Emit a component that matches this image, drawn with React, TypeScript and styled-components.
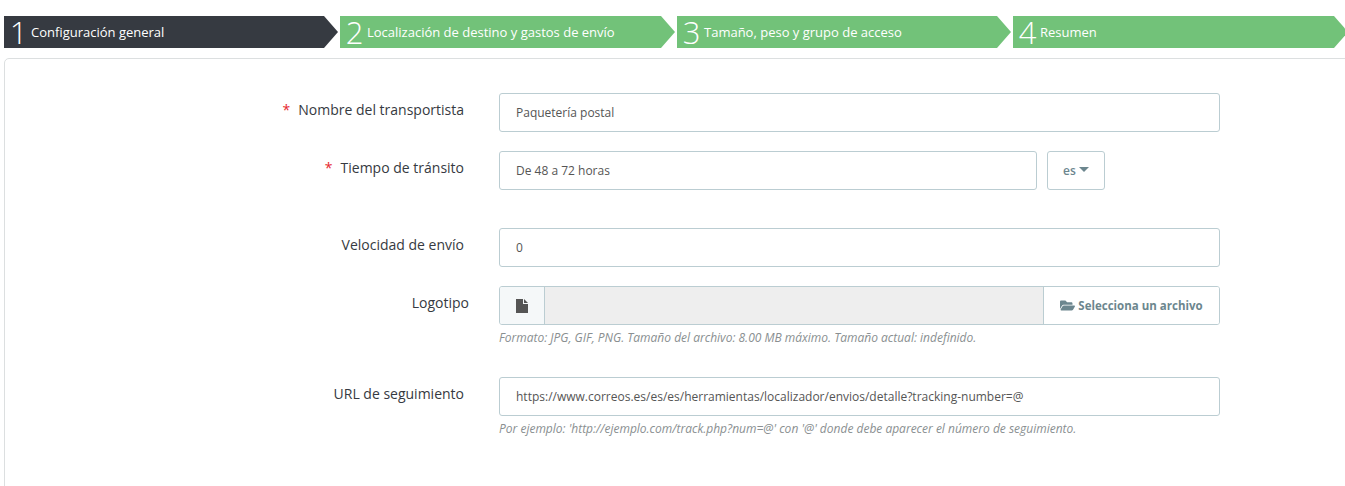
import React from 'react';
import styled, { createGlobalStyle } from 'styled-components';
import { FaFolderOpen } from 'react-icons/fa';

const GlobalStyle = createGlobalStyle`
  html, body {
    margin: 0;
    height: 486px;
    overflow: hidden;
    background: #fff;
    font-family: 'Open Sans', 'Liberation Sans', sans-serif;
  }
`;

const Page = styled.div`
  width: 1346px;
  padding: 16px 0 0 4px;
`;

const Steps = styled.ol`
  display: grid;
  grid-template-columns: 336px 337px 336px 337px;
  margin: 0 0 10px;
  padding: 0;
  list-style: none;
`;

const Step = styled.li<{ $active?: boolean }>`
  display: flex;
  align-items: center;
  height: 32px;
  margin-right: 2px;
  padding-left: 2px;
  background: ${(p) => (p.$active ? '#363a41' : '#72c279')};
  color: #fff;
  clip-path: polygon(0 0, calc(100% - 14px) 0, 100% 50%, calc(100% - 14px) 100%, 0 100%);
`;

const StepNumber = styled.span`
  width: 25px;
  font-size: 31px;
  font-weight: 300;
  line-height: 32px;
  text-align: center;
`;

const StepTitle = styled.span`
  font-size: 13px;
  white-space: nowrap;
`;

const Panel = styled.section`
  box-sizing: border-box;
  height: 480px;
  padding-top: 34px;
  border: 1px solid #dcdfe0;
  border-radius: 5px;
`;

const Row = styled.div<{ $gap?: number }>`
  display: flex;
  margin-bottom: ${(p) => p.$gap ?? 19}px;
`;

const Label = styled.label<{ $flush?: boolean }>`
  box-sizing: border-box;
  flex: none;
  width: 464px;
  padding: 7px ${(p) => (p.$flush ? 0 : 5)}px 0 0;
  font-size: 14px;
  line-height: 19px;
  color: #363a41;
  text-align: right;
`;

const Required = styled.span`
  margin-right: 8px;
  color: #e6272d;
`;

const Field = styled.div`
  width: 721px;
  margin-left: 30px;
`;

const FieldLine = styled.div`
  display: flex;
  gap: 10px;
  width: 606px;
`;

const TextInput = styled.input`
  box-sizing: border-box;
  flex: 1;
  width: 100%;
  min-width: 0;
  height: 39px;
  padding: 0 16px;
  border: 1px solid #bbcdd2;
  border-radius: 3px;
  background: #fff;
  font-family: inherit;
  font-size: 12px;
  color: #555;
  outline: none;
`;

const LangButton = styled.button`
  display: flex;
  align-items: center;
  justify-content: center;
  gap: 3px;
  flex: none;
  width: 58px;
  height: 39px;
  padding: 0;
  border: 1px solid #bbcdd2;
  border-radius: 3px;
  background: #fff;
  font-family: inherit;
  font-size: 12px;
  font-weight: 600;
  color: #6c868e;
`;

const Caret = styled.i`
  width: 0;
  height: 0;
  margin-top: -2px;
  border-top: 5px solid #6c868e;
  border-left: 5px solid transparent;
  border-right: 5px solid transparent;
`;

const FileGroup = styled.div`
  display: flex;
  box-sizing: border-box;
  height: 39px;
  border: 1px solid #bbcdd2;
  border-radius: 3px;
  overflow: hidden;
`;

const FileAddon = styled.span`
  display: flex;
  align-items: center;
  justify-content: center;
  flex: none;
  width: 44px;
  border-right: 1px solid #bbcdd2;
  background: #f5f8f9;
`;

const FileName = styled.div`
  flex: 1;
  background: #eee;
`;

const FileButton = styled.button`
  display: flex;
  align-items: center;
  justify-content: center;
  gap: 3px;
  flex: none;
  width: 176px;
  padding: 0;
  border: 0;
  border-left: 1px solid #bbcdd2;
  background: #fff;
  font-family: inherit;
  font-size: 11.5px;
  font-weight: 700;
  color: #6c868e;
`;

const Help = styled.p`
  margin: 5px 0 0;
  font-size: 12px;
  font-style: italic;
  line-height: 16px;
  color: #8a8f91;
  white-space: nowrap;
`;

const LastRow = styled(Row)`
  margin-top: 31px;
`;

const stepList = [
  'Configuración general',
  'Localización de destino y gastos de envío',
  'Tamaño, peso y grupo de acceso',
  'Resumen',
];

const App: React.FC = () => {
  return (
    <Page>
      <GlobalStyle />
      <Steps>
        {stepList.map((title, i) => (
          <Step key={title} $active={i === 0}>
            <StepNumber>{i + 1}</StepNumber>
            <StepTitle>{title}</StepTitle>
          </Step>
        ))}
      </Steps>

      <Panel>
        <Row>
          <Label>
            <Required>*</Required>
            Nombre del transportista
          </Label>
          <Field>
            <TextInput readOnly value="Paquetería postal" />
          </Field>
        </Row>

        <Row $gap={38}>
          <Label>
            <Required>*</Required>
            Tiempo de tránsito
          </Label>
          <Field>
            <FieldLine>
              <TextInput readOnly value="De 48 a 72 horas" />
              <LangButton>
                es
                <Caret />
              </LangButton>
            </FieldLine>
          </Field>
        </Row>

        <Row>
          <Label>Velocidad de envío</Label>
          <Field>
            <TextInput readOnly value="0" />
          </Field>
        </Row>

        <Row $gap={0}>
          <Label $flush>Logotipo</Label>
          <Field>
            <FileGroup>
              <FileAddon>
                <svg width="12" height="14" viewBox="0 0 12 14" fill="#555">
                  <path d="M0 0H7V5H12V14H0Z" />
                  <path d="M8 0L12 4H8Z" />
                </svg>
              </FileAddon>
              <FileName />
              <FileButton>
                <FaFolderOpen size={15} />
                Selecciona un archivo
              </FileButton>
            </FileGroup>
            <Help>Formato: JPG, GIF, PNG. Tamaño del archivo: 8.00 MB máximo. Tamaño actual: indefinido.</Help>
          </Field>
        </Row>

        <LastRow>
          <Label>URL de seguimiento</Label>
          <Field>
            <TextInput readOnly value="https://www.correos.es/es/es/herramientas/localizador/envios/detalle?tracking-number=@" />
            <Help>Por ejemplo: 'http://ejemplo.com/track.php?num=@' con '@' donde debe aparecer el número de seguimiento.</Help>
          </Field>
        </LastRow>
      </Panel>
    </Page>
  );
};

export default App;
